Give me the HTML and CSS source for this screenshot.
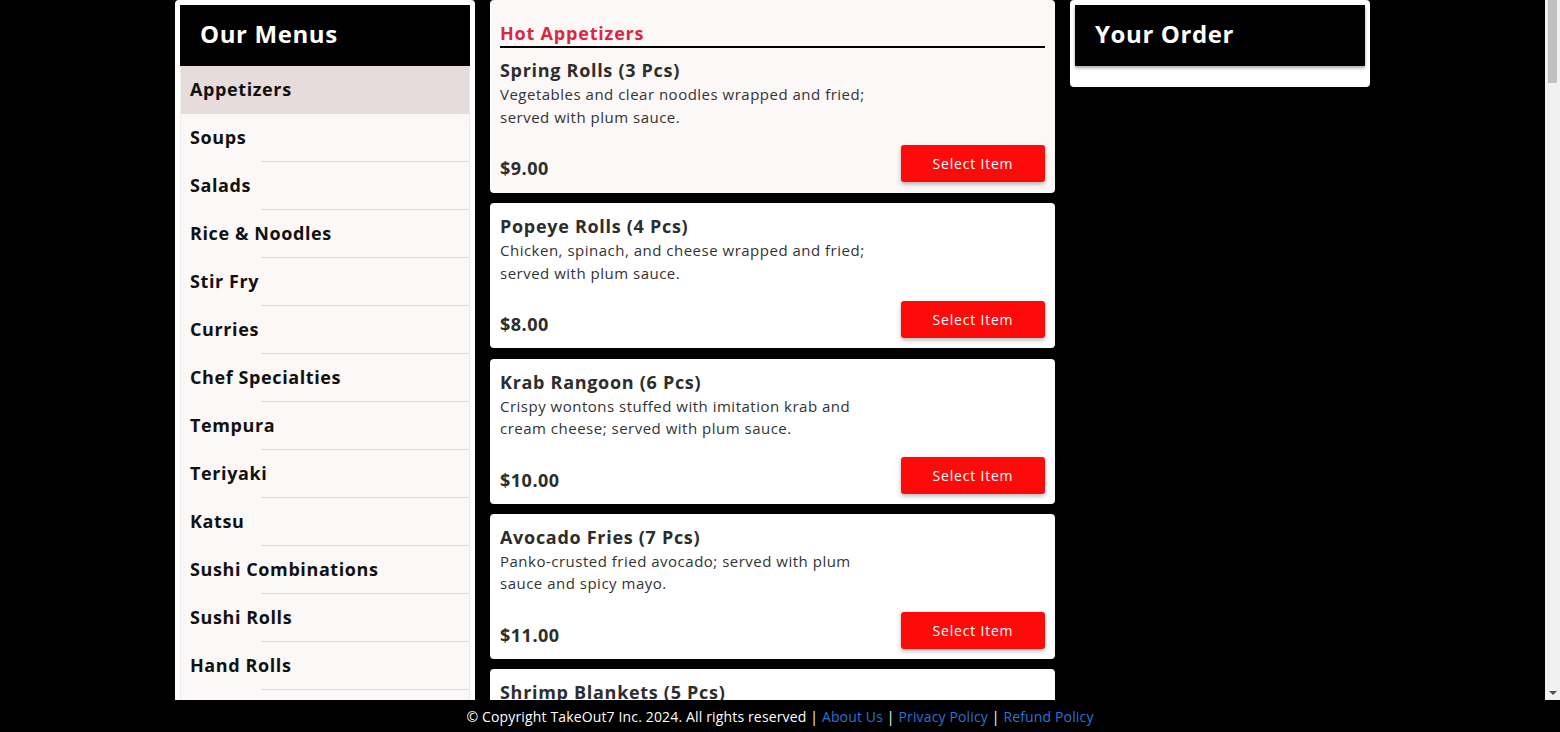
FILE: index.html
```html
<!DOCTYPE html>
<html lang="en">
<head>
<meta charset="utf-8">
<title>TakeOut7 - Menu</title>
<link rel="stylesheet" href="styles.css">
</head>
<body>
<div class="page">
  <div class="viewport">
  <div class="scroller">
    <div class="layout">
      <aside class="sidebar">
        <div class="panel-head"><h1>Our Menus</h1></div>
        <ul class="menu-list">
          <li class="menu-item active">Appetizers</li>
          <li class="menu-item">Soups</li>
          <li class="menu-item">Salads</li>
          <li class="menu-item">Rice &amp; Noodles</li>
          <li class="menu-item">Stir Fry</li>
          <li class="menu-item">Curries</li>
          <li class="menu-item">Chef Specialties</li>
          <li class="menu-item">Tempura</li>
          <li class="menu-item">Teriyaki</li>
          <li class="menu-item">Katsu</li>
          <li class="menu-item">Sushi Combinations</li>
          <li class="menu-item">Sushi Rolls</li>
          <li class="menu-item">Hand Rolls</li>
          <li class="menu-item">Sashimi</li>
          <li class="menu-item">Nigiri</li>
          <li class="menu-item">Kids Menu</li>
          <li class="menu-item">Sides</li>
          <li class="menu-item">Desserts</li>
          <li class="menu-item">Drinks</li>
        </ul>
      </aside>

      <main class="items">
        <section class="card first">
          <h2 class="section-title">Hot Appetizers</h2>
          <h3 class="item-name">Spring Rolls (3 Pcs)</h3>
          <p class="item-desc">Vegetables and clear noodles wrapped and fried; served with plum sauce.</p>
          <div class="item-foot"><span class="price">$9.00</span><button class="select-btn">Select Item</button></div>
        </section>
        <section class="card">
          <h3 class="item-name">Popeye Rolls (4 Pcs)</h3>
          <p class="item-desc">Chicken, spinach, and cheese wrapped and fried; served with plum sauce.</p>
          <div class="item-foot"><span class="price">$8.00</span><button class="select-btn">Select Item</button></div>
        </section>
        <section class="card">
          <h3 class="item-name">Krab Rangoon (6 Pcs)</h3>
          <p class="item-desc">Crispy wontons stuffed with imitation krab and cream cheese; served with plum sauce.</p>
          <div class="item-foot"><span class="price">$10.00</span><button class="select-btn">Select Item</button></div>
        </section>
        <section class="card">
          <h3 class="item-name">Avocado Fries (7 Pcs)</h3>
          <p class="item-desc">Panko-crusted fried avocado; served with plum sauce and spicy mayo.</p>
          <div class="item-foot"><span class="price">$11.00</span><button class="select-btn">Select Item</button></div>
        </section>
        <section class="card">
          <h3 class="item-name">Shrimp Blankets (5 Pcs)</h3>
          <p class="item-desc">Shrimp wrapped in spring roll skin and fried; served with plum sauce.</p>
          <div class="item-foot"><span class="price">$10.00</span><button class="select-btn">Select Item</button></div>
        </section>
        <section class="card">
          <h3 class="item-name">Gyoza (6 Pcs)</h3>
          <p class="item-desc">Pan-fried pork and vegetable dumplings; served with gyoza sauce.</p>
          <div class="item-foot"><span class="price">$9.00</span><button class="select-btn">Select Item</button></div>
        </section>
        <section class="card">
          <h3 class="item-name">Chicken Satay (4 Skewers)</h3>
          <p class="item-desc">Grilled marinated chicken; served with peanut sauce and cucumber salad.</p>
          <div class="item-foot"><span class="price">$12.00</span><button class="select-btn">Select Item</button></div>
        </section>
        <section class="card">
          <h3 class="item-name">Fried Tofu</h3>
          <p class="item-desc">Golden fried tofu; served with sweet chili sauce and crushed peanuts.</p>
          <div class="item-foot"><span class="price">$8.00</span><button class="select-btn">Select Item</button></div>
        </section>
        <section class="card">
          <h3 class="item-name">Edamame</h3>
          <p class="item-desc">Steamed soybeans lightly tossed with sea salt.</p>
          <div class="item-foot"><span class="price">$6.00</span><button class="select-btn">Select Item</button></div>
        </section>

        <section class="card first">
          <h2 class="section-title">Soups</h2>
          <h3 class="item-name">Tom Yum Soup</h3>
          <p class="item-desc">Hot and sour soup with lemongrass, mushrooms, tomatoes, and cilantro.</p>
          <div class="item-foot"><span class="price">$7.00</span><button class="select-btn">Select Item</button></div>
        </section>
        <section class="card">
          <h3 class="item-name">Tom Kha Soup</h3>
          <p class="item-desc">Coconut milk soup with galangal, mushrooms, and cilantro.</p>
          <div class="item-foot"><span class="price">$7.00</span><button class="select-btn">Select Item</button></div>
        </section>
        <section class="card">
          <h3 class="item-name">Miso Soup</h3>
          <p class="item-desc">Soybean broth with tofu, seaweed, and scallions.</p>
          <div class="item-foot"><span class="price">$4.00</span><button class="select-btn">Select Item</button></div>
        </section>
        <section class="card">
          <h3 class="item-name">Wonton Soup</h3>
          <p class="item-desc">Pork wontons in clear broth with vegetables and scallions.</p>
          <div class="item-foot"><span class="price">$7.00</span><button class="select-btn">Select Item</button></div>
        </section>

        <section class="card first">
          <h2 class="section-title">Salads</h2>
          <h3 class="item-name">House Salad</h3>
          <p class="item-desc">Mixed greens, carrots, and cucumber with ginger dressing.</p>
          <div class="item-foot"><span class="price">$6.00</span><button class="select-btn">Select Item</button></div>
        </section>
        <section class="card">
          <h3 class="item-name">Seaweed Salad</h3>
          <p class="item-desc">Marinated seaweed with sesame seeds.</p>
          <div class="item-foot"><span class="price">$7.00</span><button class="select-btn">Select Item</button></div>
        </section>
        <section class="card">
          <h3 class="item-name">Papaya Salad</h3>
          <p class="item-desc">Shredded green papaya, tomatoes, green beans, and peanuts in lime dressing.</p>
          <div class="item-foot"><span class="price">$10.00</span><button class="select-btn">Select Item</button></div>
        </section>

        <section class="card first">
          <h2 class="section-title">Rice &amp; Noodles</h2>
          <h3 class="item-name">Pad Thai</h3>
          <p class="item-desc">Rice noodles stir-fried with egg, bean sprouts, scallions, and peanuts.</p>
          <div class="item-foot"><span class="price">$14.00</span><button class="select-btn">Select Item</button></div>
        </section>
        <section class="card">
          <h3 class="item-name">Pad See Ew</h3>
          <p class="item-desc">Wide rice noodles stir-fried with egg, broccoli, and sweet soy sauce.</p>
          <div class="item-foot"><span class="price">$14.00</span><button class="select-btn">Select Item</button></div>
        </section>
        <section class="card">
          <h3 class="item-name">Drunken Noodles</h3>
          <p class="item-desc">Wide rice noodles with basil, bell peppers, onions, and chili.</p>
          <div class="item-foot"><span class="price">$14.00</span><button class="select-btn">Select Item</button></div>
        </section>
        <section class="card">
          <h3 class="item-name">Thai Fried Rice</h3>
          <p class="item-desc">Jasmine rice stir-fried with egg, onions, tomatoes, and scallions.</p>
          <div class="item-foot"><span class="price">$13.00</span><button class="select-btn">Select Item</button></div>
        </section>
      </main>

      <aside class="order">
        <div class="panel-head shadow"><h1>Your Order</h1></div>
        <div class="order-body"></div>
      </aside>
    </div>
  </div>
  <div class="vscroll" aria-hidden="true">
    <div class="vscroll-thumb"></div>
    <div class="vscroll-track"></div>
    <div class="vscroll-arrow"></div>
  </div>
  </div>
  <footer class="footer">
    <p class="footer-text">© Copyright TakeOut7 Inc. 2024. All rights reserved | <a href="#">About Us</a> | <a href="#">Privacy Policy</a> | <a href="#">Refund Policy</a></p>
  </footer>
</div>
</body>
</html>
```
FILE: styles.css
```css
* { box-sizing: border-box; }
html, body { margin: 0; padding: 0; height: 100%; }
body {
  background: #000;
  font-family: "Open Sans", "Liberation Sans", sans-serif;
  color: #333;
  letter-spacing: 0.5px;
}
.page {
  height: 100vh;
  display: flex;
  flex-direction: column;
}
.viewport {
  flex: 1;
  min-height: 0;
  display: flex;
}
.scroller {
  flex: 1;
  overflow: hidden;
  min-height: 0;
}
.vscroll {
  width: 15px;
  flex: none;
  background: #f1f1f1;
  display: flex;
  flex-direction: column;
  align-items: center;
}
.vscroll-thumb {
  width: 9px;
  height: 83px;
  background: #c1c1c1;
  flex: none;
}
.vscroll-track { flex: 1; }
.vscroll-arrow {
  flex: none;
  width: 0;
  height: 0;
  margin: 0 0 5px;
  border-left: 4px solid transparent;
  border-right: 4px solid transparent;
  border-top: 4px solid #505050;
}
.layout {
  width: 1195px;
  margin: 0 auto;
  display: flex;
  align-items: flex-start;
  gap: 15px;
}
.sidebar, .order {
  width: 300px;
  flex: none;
  background: #fff;
  border-radius: 4px;
  padding: 5px;
}
.panel-head {
  background: #000;
  height: 61px;
  display: flex;
  align-items: center;
  padding-left: 20px;
  padding-bottom: 4px;
}
.panel-head.shadow { box-shadow: 0 2px 3px rgba(0,0,0,0.35); }
.panel-head h1 {
  margin: 0;
  color: #fff;
  font-size: 24px;
  font-weight: 700;
  letter-spacing: 0.6px;
}
.menu-list {
  list-style: none;
  margin: 0;
  padding: 0;
  border-right: 1px solid #ece8e8;
  border-left: 1px solid #f2eeee;
}
.menu-item {
  height: 48px;
  display: flex;
  align-items: center;
  padding-left: 9px;
  padding-bottom: 2px;
  font-size: 18px;
  font-weight: 700;
  color: #111;
  letter-spacing: 0.6px;
  background: linear-gradient(#dfdbdb, #dfdbdb) no-repeat right bottom / calc(100% - 80px) 1px, #fcf8f7;
}
.menu-item.active {
  background: #e6dcdc;
}
.items {
  width: 565px;
  flex: none;
  display: flex;
  flex-direction: column;
  gap: 10.3px;
  padding-bottom: 10px;
}
.card {
  background: #fff;
  border-radius: 4px;
  padding: 10px;
}
.card.first { background: #fcf8f7; padding-bottom: 11px; }
.section-title {
  margin: 12px 0 9px;
  padding-bottom: 2px;
  border-bottom: 2px solid #000;
  color: #d9283f;
  font-size: 18px;
  font-weight: 700;
  line-height: 22px;
  letter-spacing: 0.8px;
}
.item-name {
  margin: 0;
  font-size: 18px;
  line-height: 26px;
  font-weight: 700;
  color: #2d2d2d;
  letter-spacing: 0.7px;
}
.item-desc {
  margin: 0;
  max-width: 380px;
  font-size: 15px;
  line-height: 22.5px;
  color: #333;
}
.item-foot {
  margin-top: 17px;
  display: flex;
  justify-content: space-between;
  align-items: flex-end;
}
.price {
  font-size: 18px;
  font-weight: 700;
  color: #2d2d2d;
  line-height: 26px;
  margin-bottom: 1px;
}
.select-btn {
  width: 144px;
  height: 37px;
  border: none;
  border-radius: 3px;
  background: #fe0a0a;
  color: #fff;
  font-family: inherit;
  font-size: 14px;
  letter-spacing: 0.8px;
  box-shadow: 0 2px 4px rgba(0,0,0,0.3);
}
.order-body { height: 16px; }
.footer {
  height: 32px;
  flex: none;
  display: flex;
  align-items: center;
  justify-content: center;
}
.footer-text {
  margin: 0;
  color: #fff;
  font-size: 14px;
  letter-spacing: 0.15px;
  white-space: nowrap;
}
.footer a { color: #2a72dc; text-decoration: none; }
```
